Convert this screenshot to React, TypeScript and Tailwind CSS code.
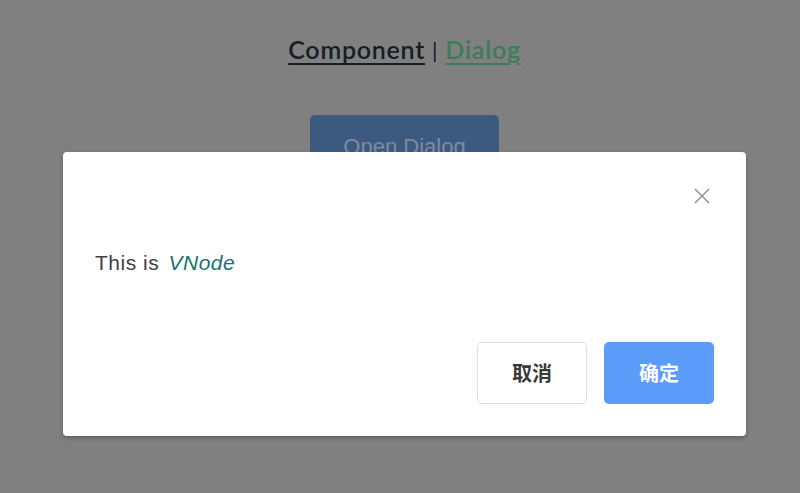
import React from 'react';

const CloseIcon = () => (
  <svg width="16" height="16" viewBox="0 0 16 16" fill="none">
    <path d="M1 1L15 15M15 1L1 15" stroke="#8c8c8c" strokeWidth="1.4" />
  </svg>
);

export default function App() {
  return (
    <div className="relative h-[493px] w-[800px] overflow-hidden bg-[#808080] font-['Liberation_Sans',sans-serif]">
      <div className="flex flex-col items-center pl-[9px] pt-[31px]">
        <div className="flex items-center gap-[7px] font-['Lato',sans-serif] text-[25px] font-semibold tracking-[0.75px]">
          <span className="text-[#161d28] underline decoration-2 underline-offset-[4px]">Component</span>
          <span className="text-[22px] font-normal text-[#161d28]">|</span>
          <span className="text-[#3b7d58] underline decoration-2 underline-offset-[4px]">Dialog</span>
        </div>
        <button className="mt-[46px] flex h-[60px] w-[189px] justify-center rounded-[5px] bg-[#3c5a80] pt-[15px] text-[22px] text-[#7e8b9c]">
          Open Dialog
        </button>
      </div>

      <div className="absolute inset-0 flex items-start pl-[63px] pt-[152px]">
        <div className="flex h-[284px] w-[683px] flex-col rounded-[4px] bg-white shadow-[0_2px_4px_rgba(0,0,0,0.25)]">
          <div className="flex justify-end pr-[36px] pt-[36px]">
            <CloseIcon />
          </div>
          <div className="pl-[32px] pt-[43px] text-[21px] tracking-[0.5px] text-[#3e4147]">
            This is <i className="ml-[3px] text-[#19726f]">VNode</i>
          </div>
          <div className="mt-auto flex justify-end gap-[17px] pb-[32px] pr-[32px]">
            <button className="flex h-[62px] w-[110px] items-center justify-center rounded-[5px] border border-[#dcdfe6] bg-white font-['Noto_Sans_CJK_SC',sans-serif] text-[20px] font-semibold text-[#3a3a3a]">
              取消
            </button>
            <button className="flex h-[62px] w-[110px] items-center justify-center rounded-[5px] bg-[#5a9cf8] font-['Noto_Sans_CJK_SC',sans-serif] text-[20px] font-bold text-white">
              确定
            </button>
          </div>
        </div>
      </div>
    </div>
  );
}
